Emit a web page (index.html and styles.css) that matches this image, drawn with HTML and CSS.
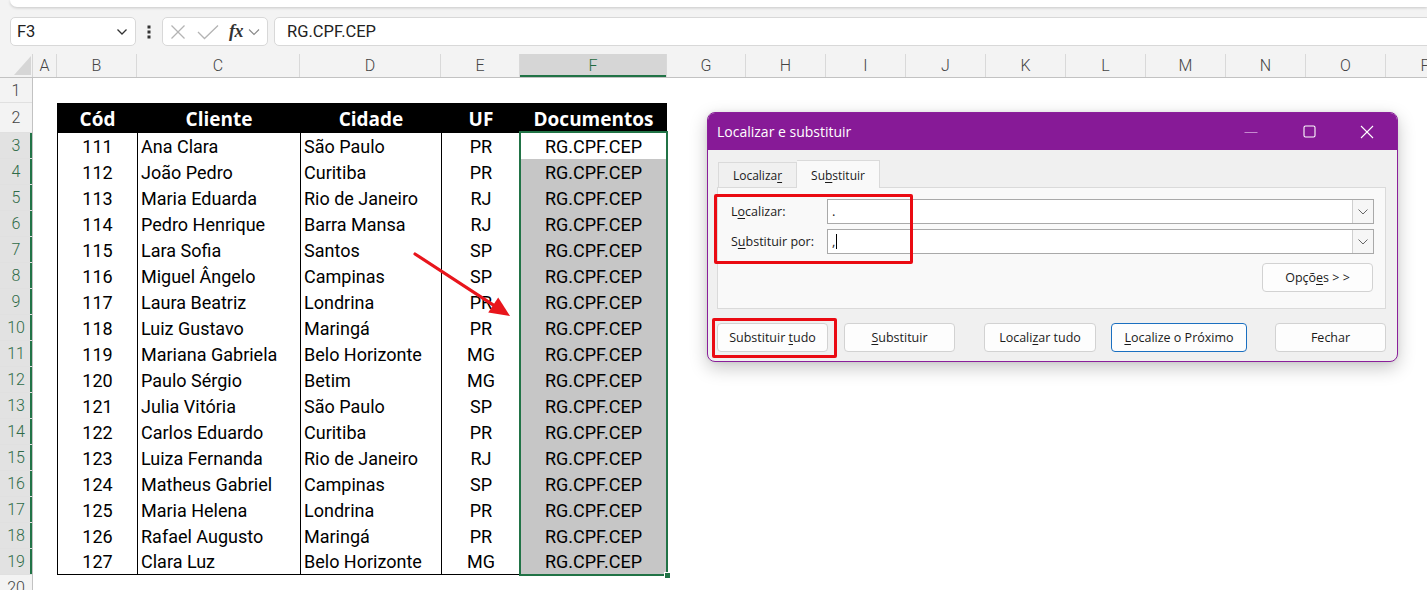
FILE: index.html
```html
<!DOCTYPE html>
<html lang="pt-BR">
<head>
<meta charset="utf-8">
<title>Localizar e substituir</title>
<link rel="stylesheet" href="styles.css">
</head>
<body>
<div class="ribbon-edge"></div>
<div class="formula-bar">
  <div class="namebox">
    <span>F3</span>
    <svg class="chev" width="12" height="8" viewBox="0 0 12 8"><polyline points="1.5,1.5 6,6 10.5,1.5" fill="none" stroke="#333" stroke-width="1.3"/></svg>
  </div>
  <div class="kebab">
    <svg width="6" height="14" viewBox="0 0 6 14"><rect x="1.5" y="0.5" width="3" height="3" fill="#333"/><rect x="1.5" y="5.5" width="3" height="3" fill="#333"/><rect x="1.5" y="10.5" width="3" height="3" fill="#333"/></svg>
  </div>
  <div class="fxbox">
    <svg class="fx-x" width="16" height="16" viewBox="0 0 16 16"><line x1="1.5" y1="1.5" x2="14.5" y2="14.5" stroke="#b4b4b4" stroke-width="1.3"/><line x1="14.5" y1="1.5" x2="1.5" y2="14.5" stroke="#b4b4b4" stroke-width="1.3"/></svg>
    <svg class="fx-ok" width="22" height="16" viewBox="0 0 22 16"><polyline points="1,8 7.5,14.5 21,1.5" fill="none" stroke="#b4b4b4" stroke-width="1.3"/></svg>
    <span class="fx">fx</span>
    <svg class="fx-chev" width="12" height="8" viewBox="0 0 12 8"><polyline points="1,1.5 6,6.5 11,1.5" fill="none" stroke="#888" stroke-width="1.1"/></svg>
  </div>
  <div class="formula">RG.CPF.CEP</div>
</div>

<div class="col-headers">
  <div class="corner"><svg width="33" height="23" viewBox="0 0 33 23"><polygon points="14,21 31,2 31,21" fill="#d6d6d6"/></svg></div>
  <div class="ch w-a">A</div>
  <div class="ch w-b">B</div>
  <div class="ch w-c">C</div>
  <div class="ch w-d">D</div>
  <div class="ch w-e">E</div>
  <div class="ch w-f sel">F</div>
  <div class="ch w-g">G</div>
  <div class="ch w-n">H</div>
  <div class="ch w-n">I</div>
  <div class="ch w-n">J</div>
  <div class="ch w-n">K</div>
  <div class="ch w-n">L</div>
  <div class="ch w-n">M</div>
  <div class="ch w-n">N</div>
  <div class="ch w-n">O</div>
  <div class="ch w-n">P</div>
</div>

<div class="sheet">
  <div class="row-headers">
    <div class="rh r1">1</div>
    <div class="rh r2">2</div>
    <div class="rh sel">3</div>
    <div class="rh sel">4</div>
    <div class="rh sel">5</div>
    <div class="rh sel">6</div>
    <div class="rh sel">7</div>
    <div class="rh sel">8</div>
    <div class="rh sel">9</div>
    <div class="rh sel">10</div>
    <div class="rh sel">11</div>
    <div class="rh sel">12</div>
    <div class="rh sel">13</div>
    <div class="rh sel">14</div>
    <div class="rh sel">15</div>
    <div class="rh sel">16</div>
    <div class="rh sel">17</div>
    <div class="rh sel">18</div>
    <div class="rh sel">19</div>
    <div class="rh">20</div>
  </div>
  <div class="cells">
    <div class="tbl">
      <div class="c hd">Cód</div><div class="c hd">Cliente</div><div class="c hd">Cidade</div><div class="c hd">UF</div><div class="c hd f">Documentos</div>

      <div class="c ctr">111</div><div class="c l">Ana Clara</div><div class="c l">São Paulo</div><div class="c ctr">PR</div><div class="c ctr f">RG.CPF.CEP</div>
      <div class="c ctr">112</div><div class="c l">João Pedro</div><div class="c l">Curitiba</div><div class="c ctr">PR</div><div class="c ctr f s">RG.CPF.CEP</div>
      <div class="c ctr">113</div><div class="c l">Maria Eduarda</div><div class="c l">Rio de Janeiro</div><div class="c ctr">RJ</div><div class="c ctr f s">RG.CPF.CEP</div>
      <div class="c ctr">114</div><div class="c l">Pedro Henrique</div><div class="c l">Barra Mansa</div><div class="c ctr">RJ</div><div class="c ctr f s">RG.CPF.CEP</div>
      <div class="c ctr">115</div><div class="c l">Lara Sofia</div><div class="c l">Santos</div><div class="c ctr">SP</div><div class="c ctr f s">RG.CPF.CEP</div>
      <div class="c ctr">116</div><div class="c l">Miguel Ângelo</div><div class="c l">Campinas</div><div class="c ctr">SP</div><div class="c ctr f s">RG.CPF.CEP</div>
      <div class="c ctr">117</div><div class="c l">Laura Beatriz</div><div class="c l">Londrina</div><div class="c ctr">PR</div><div class="c ctr f s">RG.CPF.CEP</div>
      <div class="c ctr">118</div><div class="c l">Luiz Gustavo</div><div class="c l">Maringá</div><div class="c ctr">PR</div><div class="c ctr f s">RG.CPF.CEP</div>
      <div class="c ctr">119</div><div class="c l">Mariana Gabriela</div><div class="c l">Belo Horizonte</div><div class="c ctr">MG</div><div class="c ctr f s">RG.CPF.CEP</div>
      <div class="c ctr">120</div><div class="c l">Paulo Sérgio</div><div class="c l">Betim</div><div class="c ctr">MG</div><div class="c ctr f s">RG.CPF.CEP</div>
      <div class="c ctr">121</div><div class="c l">Julia Vitória</div><div class="c l">São Paulo</div><div class="c ctr">SP</div><div class="c ctr f s">RG.CPF.CEP</div>
      <div class="c ctr">122</div><div class="c l">Carlos Eduardo</div><div class="c l">Curitiba</div><div class="c ctr">PR</div><div class="c ctr f s">RG.CPF.CEP</div>
      <div class="c ctr">123</div><div class="c l">Luiza Fernanda</div><div class="c l">Rio de Janeiro</div><div class="c ctr">RJ</div><div class="c ctr f s">RG.CPF.CEP</div>
      <div class="c ctr">124</div><div class="c l">Matheus Gabriel</div><div class="c l">Campinas</div><div class="c ctr">SP</div><div class="c ctr f s">RG.CPF.CEP</div>
      <div class="c ctr">125</div><div class="c l">Maria Helena</div><div class="c l">Londrina</div><div class="c ctr">PR</div><div class="c ctr f s">RG.CPF.CEP</div>
      <div class="c ctr">126</div><div class="c l">Rafael Augusto</div><div class="c l">Maringá</div><div class="c ctr">PR</div><div class="c ctr f s">RG.CPF.CEP</div>
      <div class="c ctr last">127</div><div class="c l last">Clara Luz</div><div class="c l last">Belo Horizonte</div><div class="c ctr last">MG</div><div class="c ctr f s last">RG.CPF.CEP</div>

      <div class="selbox"><span class="handle"></span></div>
    </div>
  </div>
</div>

<svg class="arrow" width="115" height="80" viewBox="0 0 115 80">
  <line x1="10" y1="9" x2="90" y2="61.2" stroke="#e8151c" stroke-width="3.2" stroke-linecap="round"/>
  <polygon points="105,71 83.2,67.4 93.2,52.4" fill="#e8151c"/>
</svg>

<div class="dialog">
  <div class="dlg-title">
    <span class="dlg-caption">Localizar e substituir</span>
    <div class="win-ctrls">
      <span class="wc"><svg width="14" height="14" viewBox="0 0 14 14"><line x1="0.5" y1="7.5" x2="13.5" y2="7.5" stroke="#c68ad0" stroke-width="1"/></svg></span>
      <span class="wc"><svg width="13" height="13" viewBox="0 0 13 13"><rect x="1" y="1" width="11" height="11" rx="1.5" fill="none" stroke="#fff" stroke-width="1.1"/></svg></span>
      <span class="wc"><svg width="14" height="14" viewBox="0 0 14 14"><line x1="1" y1="1" x2="13" y2="13" stroke="#fff" stroke-width="1.1"/><line x1="13" y1="1" x2="1" y2="13" stroke="#fff" stroke-width="1.1"/></svg></span>
    </div>
  </div>
  <div class="dlg-body">
    <div class="tabs">
      <div class="tab"><span>Localiza<u>r</u></span></div>
      <div class="tab active"><span>Su<u>b</u>stituir</span></div>
    </div>
    <div class="panel">
      <div class="field">
        <span class="lbl">L<u>o</u>calizar:</span>
        <div class="combo"><span class="val">.</span><span class="dd"><svg width="10" height="6" viewBox="0 0 10 6"><polyline points="0.5,0.5 5,5 9.5,0.5" fill="none" stroke="#666" stroke-width="1"/></svg></span></div>
      </div>
      <div class="field">
        <span class="lbl">S<u>u</u>bstituir por:</span>
        <div class="combo"><span class="val">,<span class="caret"></span></span><span class="dd"><svg width="10" height="6" viewBox="0 0 10 6"><polyline points="0.5,0.5 5,5 9.5,0.5" fill="none" stroke="#666" stroke-width="1"/></svg></span></div>
      </div>
      <div class="opt-row"><span class="btn opt"><span>Opçõ<u>e</u>s &gt; &gt;</span></span></div>
    </div>
    <div class="actions">
      <span class="btn b-all"><span>Substituir <u>t</u>udo</span></span>
      <span class="btn b-one"><span><u>S</u>ubstituir</span></span>
      <span class="btn b-findall"><span>Locali<u>z</u>ar tudo</span></span>
      <span class="btn b-next"><span><u>L</u>ocalize o Próximo</span></span>
      <span class="btn b-close"><span>Fechar</span></span>
    </div>
  </div>
  <div class="mark mark-fields"></div>
  <div class="mark mark-btn"></div>
</div>
</body>
</html>
```

FILE: styles.css
```css
* { box-sizing: border-box; }
html, body { margin: 0; padding: 0; }
body {
  width: 1427px;
  height: 590px;
  overflow: hidden;
  position: relative;
  background: #f3f3f3;
  font-family: Roboto, "Liberation Sans", sans-serif;
  color: #000;
}

/* ribbon bottom edge */
.ribbon-edge {
  height: 7px;
  margin-left: 10px;
  background: #fff;
  border-bottom-left-radius: 7px;
  box-shadow: 0 1px 3px rgba(0,0,0,0.18);
}

/* formula bar */
.formula-bar {
  height: 47px;
  display: flex;
  align-items: flex-start;
  padding: 10px 0 0 10px;
}
.namebox {
  width: 126px;
  height: 29px;
  background: #fff;
  border: 1px solid #d8d8d8;
  border-radius: 5px;
  display: flex;
  align-items: center;
  justify-content: space-between;
  padding: 0 7px 0 6px;
  font-size: 16.5px;
  color: #222;
}
.kebab {
  width: 26px;
  height: 29px;
  display: flex;
  align-items: center;
  justify-content: center;
}
.fxbox {
  width: 106px;
  height: 29px;
  background: #fff;
  border: 1px solid #d8d8d8;
  border-radius: 5px;
  display: flex;
  align-items: center;
  padding-left: 7px;
}
.fx-ok { margin-left: 11px; }
.fx {
  margin-left: 10px;
  font-family: "Liberation Serif", "DejaVu Serif", serif;
  font-style: italic;
  font-weight: 700;
  font-size: 18px;
  color: #333;
  letter-spacing: -0.5px;
}
.fx-chev { margin-left: 5px; }
.formula {
  flex: 1;
  height: 29px;
  margin-left: 6px;
  margin-right: -8px;
  background: #fff;
  border: 1px solid #d8d8d8;
  border-radius: 5px;
  padding-left: 12px;
  display: flex;
  align-items: center;
  font-size: 16.5px;
  color: #222;
}

/* column headers */
.col-headers {
  height: 24px;
  display: flex;
  border-bottom: 1px solid #c2c2c2;
  background: #f3f3f3;
}
.corner { width: 33px; border-right: 1px solid #d6d6d6; }
.corner svg { display: block; }
.ch {
  border-right: 1px solid #d9d9d9;
  display: flex;
  align-items: center;
  justify-content: center;
  font-size: 16px;
  font-weight: 300;
  color: #444;
  flex: none;
}
.ch.sel {
  background: #d6d6d6;
  color: #1f6a3f;
  box-shadow: inset 0 -2px 0 #217346;
}
.w-a { width: 24px; }
.w-b { width: 80px; }
.w-c { width: 163px; }
.w-d { width: 141px; }
.w-e { width: 79px; }
.w-f { width: 147px; }
.w-g { width: 79px; }
.w-n { width: 80px; }

/* sheet */
.sheet {
  display: flex;
  height: 512px;
}
.row-headers {
  width: 33px;
  flex: none;
  background: #f3f3f3;
  border-right: 1px solid #c2c2c2;
}
.rh {
  height: 26px;
  border-bottom: 1px solid #e0e0e0;
  display: flex;
  align-items: center;
  justify-content: center;
  font-size: 16px;
  font-weight: 300;
  color: #444;
}
.rh.r1 { height: 25px; }
.rh.r2 { height: 30px; }
.rh.sel {
  background: #e2e2e2;
  color: #2f6b48;
  box-shadow: inset -2px 0 0 #217346;
}
.cells {
  flex: 1;
  background: #fff;
  padding: 25px 0 0 24px;
}

/* data table */
.tbl {
  position: relative;
  width: 610px;
  display: grid;
  grid-template-columns: 80px 163px 141px 79px 147px;
  grid-template-rows: 30px;
  grid-auto-rows: 26px;
}
.c {
  border-left: 1px solid #000;
  display: flex;
  align-items: center;
  font-size: 18px;
  white-space: nowrap;
  overflow: hidden;
}
.c.ctr { justify-content: center; }
.c.l { padding-left: 3px; }
.c.f { border-right: 1px solid #000; }
.c.s { background: #c6c6c6; }
.c.last { border-bottom: 1px solid #000; }
.c.hd {
  background: #000;
  color: #fff;
  justify-content: center;
  font-family: "Open Sans", Roboto, sans-serif;
  font-weight: 700;
  font-size: 19px;
  padding-top: 1px;
}
.selbox {
  position: absolute;
  left: 462px;
  top: 28px;
  width: 149px;
  height: 445px;
  border: 2px solid #217346;
  pointer-events: none;
}
.handle {
  position: absolute;
  right: -5px;
  bottom: -5px;
  width: 7px;
  height: 7px;
  background: #217346;
  border: 1px solid #fff;
}

/* annotation arrow */
.arrow {
  position: absolute;
  left: 405px;
  top: 245px;
}

/* dialog */
.dialog {
  position: absolute;
  left: 707px;
  top: 112px;
  width: 691px;
  height: 250px;
  border: 1px solid #8a1f9a;
  border-radius: 8px;
  background: #f0f0f0;
  box-shadow: 0 6px 18px rgba(0,0,0,0.22), 0 0 4px rgba(0,0,0,0.08);
  font-family: "Open Sans", "Noto Sans", sans-serif;
  color: #1b1b1b;
}
.dlg-title {
  height: 37px;
  background: #871a97;
  border-radius: 7px 7px 0 0;
  display: flex;
  align-items: center;
  justify-content: space-between;
  padding-left: 9px;
}
.dlg-caption {
  color: #fff;
  font-size: 14px;
}
.win-ctrls {
  display: flex;
  height: 100%;
  padding-right: 1px;
}
.wc {
  width: 58px;
  display: flex;
  align-items: center;
  justify-content: center;
}
.wc svg { display: block; }
.dlg-body {
  padding: 10px 11px 0 9px;
}
.tabs {
  display: flex;
  align-items: flex-end;
  height: 27px;
  padding-left: 1px;
  position: relative;
  z-index: 1;
}
.tab {
  height: 25px;
  width: 79px;
  border: 1px solid #dadada;
  border-bottom: none;
  background: #f0f0f0;
  font-size: 12px;
  display: flex;
  align-items: center;
  justify-content: center;
  padding-top: 1px;
}
.tab.active {
  height: 28px;
  width: 83px;
  margin-bottom: -1px;
  background: #f9f9f9;
  border-left: none;
}
.panel {
  height: 122px;
  background: #f9f9f9;
  border: 1px solid #dadada;
  padding: 11px 11px 0 13px;
}
.field {
  display: flex;
  align-items: center;
  height: 25px;
  margin-bottom: 5px;
}
.lbl {
  width: 96px;
  flex: none;
  font-size: 12.5px;
}
u { text-underline-offset: 1.5px; text-decoration-thickness: 1px; }
.combo {
  flex: 1;
  height: 25px;
  background: #fff;
  border: 1px solid #a9a9a9;
  display: flex;
  align-items: stretch;
  justify-content: space-between;
}
.val {
  padding-left: 4px;
  font-size: 13px;
  display: flex;
  align-items: center;
  line-height: 1;
}
.caret {
  display: inline-block;
  width: 1px;
  height: 15px;
  background: #000;
  margin-left: 1px;
}
.dd {
  width: 21px;
  border-left: 1px solid #cfcfcf;
  background: #f6f6f6;
  display: flex;
  align-items: center;
  justify-content: center;
}
.opt-row {
  display: flex;
  justify-content: flex-end;
  margin-top: 9px;
  padding-right: 1px;
}
.btn {
  display: flex;
  align-items: center;
  justify-content: center;
  height: 29px;
  width: 111px;
  background: #fdfdfd;
  border: 1px solid #d2d2d2;
  border-radius: 4px;
  font-size: 12.5px;
  color: #1b1b1b;
  flex: none;
  white-space: pre;
}
.actions {
  display: flex;
  margin-top: 14px;
}
.b-one { margin-left: 16px; }
.b-findall { margin-left: 29px; width: 112px; }
.b-next { margin-left: 15px; width: 136px; border-color: #1a6fc0; }
.b-close { margin-left: 28px; }

/* red annotation boxes */
.mark {
  position: absolute;
  border: 3px solid #ea0a12;
  border-radius: 2px;
  pointer-events: none;
}
.mark-fields {
  left: 6px;
  top: 81px;
  width: 199px;
  height: 70px;
}
.mark-btn {
  left: 4px;
  top: 205px;
  width: 125px;
  height: 40px;
}
```
